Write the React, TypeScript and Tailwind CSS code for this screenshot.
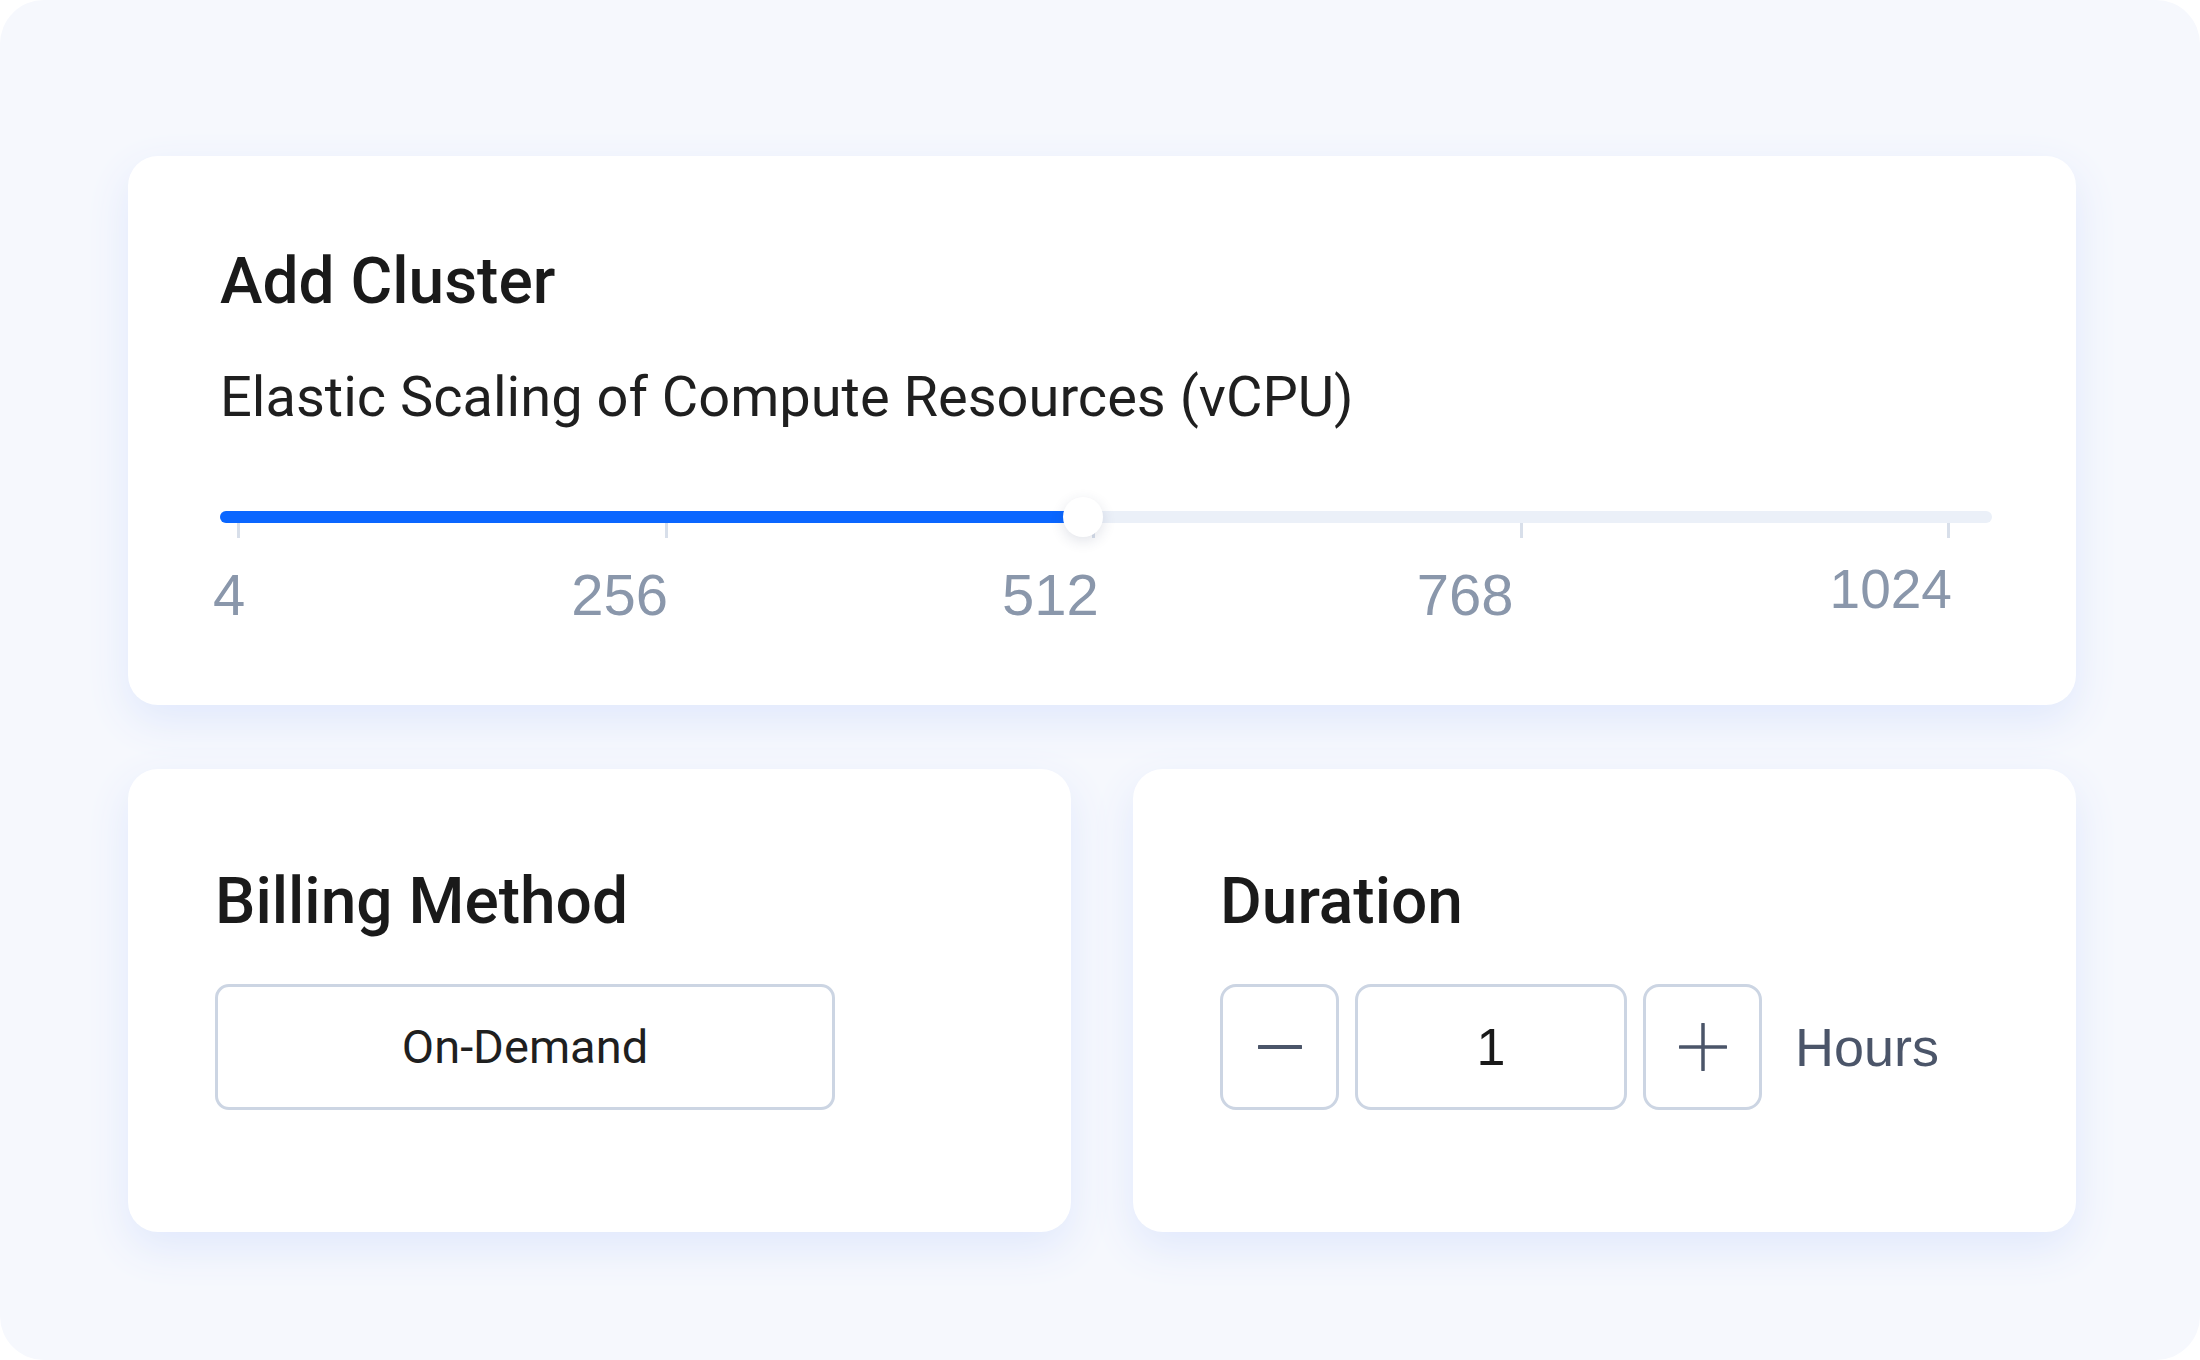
import React from 'react';

const ticks = [0, 1, 2, 3, 4];

const labels = [
  { text: '4', cls: 'ml-[-7px]' },
  { text: '256', cls: 'ml-[326px]' },
  { text: '512', cls: 'ml-[334px]' },
  { text: '768', cls: 'ml-[318px]' },
  { text: '1024', cls: 'ml-[316px] -translate-y-[4px] text-[55px]' },
];

export default function App() {
  return (
    <div className="min-h-screen bg-white">
      <div className="h-[1360px] w-full rounded-[44px] bg-[#f6f8fd] pl-[128px] pr-[124px] pt-[156px] font-['Roboto',sans-serif]">
        {/* cluster card */}
        <section className="h-[549px] rounded-[30px] bg-white pl-[92px] pr-[84px] pt-[94px] shadow-[0_16px_44px_rgba(224,232,252,1)]">
          <h1 className="text-[64px] font-medium leading-none text-[#1a1a1a]">Add Cluster</h1>
          <p className="mt-[55px] text-[56px] leading-none text-[#1f1f1f]">
            Elastic Scaling of Compute Resources (vCPU)
          </p>

          <div className="mt-[86px]">
            <div className="relative h-[12px] rounded-full bg-[#ebf0f8]">
              <div className="absolute left-0 top-0 h-full w-[863px] rounded-full bg-[#0a66ff]" />
              <div className="absolute left-[843px] top-1/2 h-10 w-10 -translate-y-1/2 rounded-full bg-white shadow-[0_4px_14px_rgba(40,60,100,0.14)]" />
            </div>
            <div className="flex justify-between pl-[17px] pr-[42px]">
              {ticks.map((t) => (
                <div key={t} className="h-[15px] w-[3px] bg-[#d8dfea]" />
              ))}
            </div>
            <div className="mt-[28px] flex font-['Liberation_Sans',sans-serif] text-[58px] leading-none text-[#8a97ab]">
              {labels.map((l) => (
                <span key={l.text} className={l.cls}>
                  {l.text}
                </span>
              ))}
            </div>
          </div>
        </section>

        <div className="mt-[64px] grid grid-cols-2 gap-[62px]">
          {/* billing */}
          <section className="h-[463px] rounded-[30px] bg-white pl-[87px] pt-[101px] shadow-[0_16px_44px_rgba(224,232,252,1)]">
            <h2 className="text-[64px] font-medium leading-none text-[#1a1a1a]">Billing Method</h2>
            <div className="mt-[50px] flex h-[126px] w-[620px] items-center justify-center rounded-[14px] border-[3px] border-[#ccd5e3] text-[47px] text-[#1f1f1f]">
              On-Demand
            </div>
          </section>

          {/* duration */}
          <section className="h-[463px] rounded-[30px] bg-white pl-[87px] pt-[101px] shadow-[0_16px_44px_rgba(224,232,252,1)]">
            <h2 className="text-[64px] font-medium leading-none text-[#1a1a1a]">Duration</h2>
            <div className="mt-[50px] flex items-center">
              <button className="flex h-[126px] w-[119px] items-center justify-center rounded-[16px] border-[3px] border-[#ccd5e3]">
                <svg width="44" height="44" viewBox="0 0 44 44" fill="none">
                  <path d="M1 22h42" stroke="#4b5569" strokeWidth="4" strokeLinecap="round" />
                </svg>
              </button>
              <div className="ml-[16px] flex h-[126px] w-[272px] items-center justify-center rounded-[16px] border-[3px] border-[#ccd5e3] font-['Liberation_Sans',sans-serif] text-[52px] text-[#1a1a1a]">
                1
              </div>
              <button className="ml-[16px] flex h-[126px] w-[119px] items-center justify-center rounded-[16px] border-[3px] border-[#ccd5e3]">
                <svg width="48" height="48" viewBox="0 0 48 48" fill="none">
                  <path d="M24 1v46M1 24h46" stroke="#4b5569" strokeWidth="3.5" strokeLinecap="round" />
                </svg>
              </button>
              <span className="ml-[33px] font-['Liberation_Sans',sans-serif] text-[54px] text-[#4b5569]">Hours</span>
            </div>
          </section>
        </div>
      </div>
    </div>
  );
}
